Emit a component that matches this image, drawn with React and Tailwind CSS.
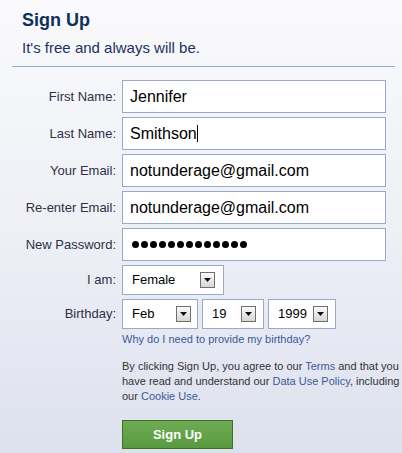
import React from 'react';

const font = { fontFamily: '"Liberation Sans", Arial, sans-serif' };

const Arrow = () => (
  <span className="w-[15px] h-[16px] border border-[#6f6f6f] bg-gradient-to-b from-[#fbfbfb] to-[#d6d6d6] flex items-center justify-center shrink-0">
    <svg width="7" height="4" viewBox="0 0 7 4">
      <path d="M0 0 L7 0 L3.5 4 Z" fill="#111" />
    </svg>
  </span>
);

const Select = ({ value, width, pr }) => (
  <div className={`${width} h-[30px] bg-white border border-[#9ba8cd] flex items-center justify-between pl-[9px] ${pr} text-[13px] text-black`}>
    <span>{value}</span>
    <Arrow />
  </div>
);

const Row = ({ label, children }) => (
  <div className="flex items-center">
    <div className="w-[117px] pr-[1px] text-right text-[13px] text-[#2f2f45]">{label}</div>
    <div className="ml-[5px]">{children}</div>
  </div>
);

const TextBox = ({ children }) => (
  <div className="w-[264px] h-[33px] bg-white border border-[#9ba8cd] flex items-center pl-[7px] text-[16px] text-black">
    {children}
  </div>
);

export default function App() {
  return (
    <div style={font} className="w-[402px] h-[453px] overflow-hidden bg-gradient-to-b from-[#fafafc] via-[#eef0f6] to-[#dde1ee]">
      {/* Header */}
      <div className="pl-[22px] pt-[9px]">
        <h1 className="text-[18px] leading-[22px] font-bold text-[#0e3159]">Sign Up</h1>
        <p className="text-[15px] leading-[18px] mt-[8px] text-[#1d3160]">It's free and always will be.</p>
      </div>
      <div className="mx-[12px] mt-[9px] h-px w-[383px] bg-[#94acd2]" />

      {/* Form */}
      <div className="mt-[13px] flex flex-col gap-[4px]">
        <Row label="First Name:">
          <TextBox>Jennifer</TextBox>
        </Row>
        <Row label="Last Name:">
          <TextBox>
            Smithson<span className="inline-block w-px h-[17px] bg-black" />
          </TextBox>
        </Row>
        <Row label="Your Email:">
          <TextBox>notunderage@gmail.com</TextBox>
        </Row>
        <Row label="Re-enter Email:">
          <TextBox>notunderage@gmail.com</TextBox>
        </Row>
        <Row label="New Password:">
          <TextBox>
            <div className="flex gap-[2px] pl-[2px]">
              {Array.from({ length: 13 }).map((_, i) => (
                <span key={i} className="w-[7px] h-[7px] rounded-full bg-black" />
              ))}
            </div>
          </TextBox>
        </Row>
        <Row label="I am:">
          <Select value="Female" width="w-[102px]" pr="pr-[8px]" />
        </Row>
        <Row label="Birthday:">
          <div className="flex gap-[4px]">
            <Select value="Feb" width="w-[76px]" pr="pr-[6px]" />
            <Select value="19" width="w-[62px]" pr="pr-[7px]" />
            <Select value="1999" width="w-[68px]" pr="pr-[7px]" />
          </div>
        </Row>
      </div>

      <div className="ml-[122px]">
        <a className="block mt-[3px] text-[11px] leading-[14px] text-[#3b5998]">Why do I need to provide my birthday?</a>
        <div className="mt-[13px] text-[11px] leading-[15px] text-[#333] whitespace-nowrap">
          <div>
            By clicking Sign Up, you agree to our <a className="text-[#3b5998]">Terms</a> and that you
          </div>
          <div>
            have read and understand our <a className="text-[#3b5998]">Data Use Policy</a>, including
          </div>
          <div>
            our <a className="text-[#3b5998]">Cookie Use</a>.
          </div>
        </div>
        <button className="mt-[16px] w-[111px] h-[29px] border border-[#3d7027] bg-gradient-to-b from-[#6eab53] to-[#599a3f] text-white text-[13px] font-bold">
          Sign Up
        </button>
      </div>
    </div>
  );
}
